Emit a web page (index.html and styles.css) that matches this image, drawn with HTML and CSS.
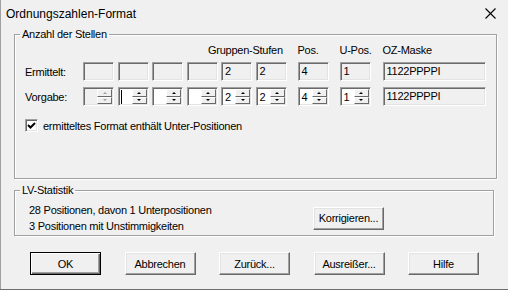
FILE: index.html
```html
<!DOCTYPE html>
<html lang="de">
<head>
    <meta charset="UTF-8">
    <title>Ordnungszahlen-Format</title>
    <link rel="stylesheet" href="styles.css">
</head>
<body>
<div class="window">
    <div class="titlebar">
        <span class="title">Ordnungszahlen-Format</span>
        <svg class="close" width="11" height="11" viewBox="0 0 11 11">
            <path d="M0.5 0.5 L10.5 10.5 M10.5 0.5 L0.5 10.5" stroke="#000" stroke-width="1.1" fill="none"/>
        </svg>
    </div>

    <div class="dialog">
        <!-- Anzahl der Stellen -->
        <fieldset class="group stellen">
            <legend>Anzahl der Stellen</legend>
            <div class="grid">
                <span class="hdr pad"></span>
                <span class="hdr gs">Gruppen-Stufen</span>
                <span class="hdr c8">Pos.</span>
                <span class="hdr c9">U-Pos.</span>
                <span class="hdr c10">OZ-Maske</span>

                <span class="lbl">Ermittelt:</span>
                <div class="edit ro"></div>
                <div class="edit ro"></div>
                <div class="edit ro"></div>
                <div class="edit ro"></div>
                <div class="edit ro">2</div>
                <div class="edit ro">2</div>
                <div class="edit ro">4</div>
                <div class="edit ro">1</div>
                <div class="edit ro wide">1122PPPPI</div>

                <span class="lbl">Vorgabe:</span>
                <div class="spin disabled"><div class="val"></div><div class="updown"><span class="up"></span><span class="down"></span></div></div>
                <div class="spin"><div class="val"><i class="caret"></i></div><div class="updown"><span class="up"></span><span class="down"></span></div></div>
                <div class="spin"><div class="val"></div><div class="updown"><span class="up"></span><span class="down"></span></div></div>
                <div class="spin"><div class="val"></div><div class="updown"><span class="up"></span><span class="down"></span></div></div>
                <div class="spin"><div class="val">2</div><div class="updown"><span class="up"></span><span class="down"></span></div></div>
                <div class="spin"><div class="val">2</div><div class="updown"><span class="up"></span><span class="down"></span></div></div>
                <div class="spin"><div class="val">4</div><div class="updown"><span class="up"></span><span class="down"></span></div></div>
                <div class="spin"><div class="val">1</div><div class="updown"><span class="up"></span><span class="down"></span></div></div>
                <div class="edit ro wide">1122PPPPI</div>
            </div>

            <label class="check">
                <span class="box">
                    <svg width="9" height="9" viewBox="0 0 9 9"><path d="M1 4 L3.5 6.5 L8 2" stroke="#000" stroke-width="2" fill="none"/></svg>
                </span>
                ermitteltes Format enthält Unter-Positionen
            </label>
        </fieldset>

        <!-- LV-Statistik -->
        <fieldset class="group stat">
            <legend>LV-Statistik</legend>
            <div class="stat-row">
                <div class="lines">
                    <div>28 Positionen, davon 1 Unterpositionen</div>
                    <div>3 Positionen mit Unstimmigkeiten</div>
                </div>
                <button class="btn">Korrigieren...</button>
            </div>
        </fieldset>

        <div class="buttons">
            <button class="btn default">OK</button>
            <button class="btn">Abbrechen</button>
            <button class="btn">Zurück...</button>
            <button class="btn">Ausreißer...</button>
            <button class="btn">Hilfe</button>
        </div>
    </div>
</div>
</body>
</html>
```

FILE: styles.css
```css
body {
    margin: 0;
    font-family: "Liberation Sans", Arial, sans-serif;
    font-size: 11px;
    letter-spacing: -0.25px;
    color: #000;
    background: #f0f0f0;
}
.window {
    width: 508px;
    height: 289px;
    background: #f0f0f0;
    border-bottom: 1px solid #6d6d6d;
    box-shadow: inset 1px 0 #a0a0a0;
}
.titlebar {
    height: 27px;
    display: flex;
    align-items: center;
    justify-content: space-between;
    padding: 0 12px 0 6px;
}
.title {
    font-size: 12px;
    letter-spacing: 0;
}
.dialog {
    padding: 0 14px;
}

/* Gruppenrahmen */
.group {
    margin: 1px 0 0;
    border: 1px solid #a0a0a0;
    box-shadow: inset 1px 1px #fff, 1px 1px #fff;
    padding: 2px 10px 0;
}
.group legend {
    padding: 0 2px;
    margin-left: -5px;
    line-height: 13px;
}
.stellen {
    padding-bottom: 46px;
}
.grid {
    display: grid;
    grid-template-columns: 58px repeat(5, 34.5px) 42px 42px 43px 103px;
    grid-template-rows: 13px 19px 19px;
    row-gap: 6px;
    align-items: center;
}
.hdr {
    white-space: nowrap;
    grid-row: 1;
}
.pad { grid-column: 1 / 6; }
.gs { grid-column: 6 / 8; margin-left: -13px; }
.c8 { grid-column: 8; }
.c9 { grid-column: 9; }
.c10 { grid-column: 10; }
.lbl {
    grid-column: 1;
}

/* Eingabefelder */
.edit, .spin {
    box-sizing: border-box;
    width: 31px;
    height: 19px;
    border: 1px solid;
    border-color: #a0a0a0 #fff #fff #a0a0a0;
    box-shadow: inset 1px 1px #696969, inset -1px -1px #e3e3e3;
    background: #fff;
}
.edit {
    padding: 1px 0 0 3px;
    line-height: 15px;
}
.ro {
    background: #f0f0f0;
}
.wide {
    width: 103px;
}
.spin {
    display: flex;
    padding: 1px;
}
.spin .val {
    flex: 1;
    padding-left: 2px;
    line-height: 16px;
    position: relative;
}
.spin.disabled .val {
    background: #f0f0f0;
}
.caret {
    position: absolute;
    left: 1px;
    top: 1px;
    width: 1px;
    height: 14px;
    background: #000;
}
.updown {
    width: 15px;
    display: flex;
    flex-direction: column;
}
.updown span {
    flex: 1;
    display: flex;
    align-items: center;
    justify-content: center;
    background: #f0f0f0;
    border-top: 1px solid #fff;
    border-left: 1px solid #fff;
    border-right: 1px solid #696969;
    border-bottom: 1px solid #696969;
}
.updown span::after {
    content: "";
    border-left: 2px solid transparent;
    border-right: 2px solid transparent;
}
.updown .up::after { border-bottom: 2px solid #000; }
.updown .down::after { border-top: 2px solid #000; }
.disabled .updown .up::after { border-bottom-color: #a0a0a0; }
.disabled .updown .down::after { border-top-color: #a0a0a0; }

/* Checkbox */
.check {
    display: flex;
    align-items: center;
    gap: 5px;
    margin-top: 13px;
    height: 13px;
}
.check .box {
    box-sizing: border-box;
    width: 13px;
    height: 13px;
    background: #fff;
    border: 1px solid;
    border-color: #a0a0a0 #fff #fff #a0a0a0;
    box-shadow: inset 1px 1px #696969, inset -1px -1px #e3e3e3;
    display: flex;
    align-items: center;
    justify-content: center;
}

/* Statistik */
.stat {
    margin-top: 5px;
    padding: 5px 10px 1px 14px;
}
.stat legend {
    margin-left: -9px;
}
.stat-row {
    display: flex;
    align-items: center;
}
.lines {
    width: 284px;
    line-height: 16px;
}

/* Buttons */
.btn {
    box-sizing: border-box;
    width: 71px;
    height: 23px;
    font: 11px "Liberation Sans", Arial, sans-serif;
    letter-spacing: -0.25px;
    color: #000;
    background: #f0f0f0;
    border: 1px solid;
    border-color: #fff #696969 #696969 #fff;
    box-shadow: inset -1px -1px #a0a0a0, inset 1px 1px #e3e3e3;
    padding: 0;
}
.btn.default {
    border-color: #000;
    box-shadow: inset 1px 1px #fff, inset -1px -1px #696969, inset -2px -2px #a0a0a0;
}
.buttons {
    display: flex;
    gap: 23.5px;
    padding-left: 16px;
    margin-top: 16px;
}
```
